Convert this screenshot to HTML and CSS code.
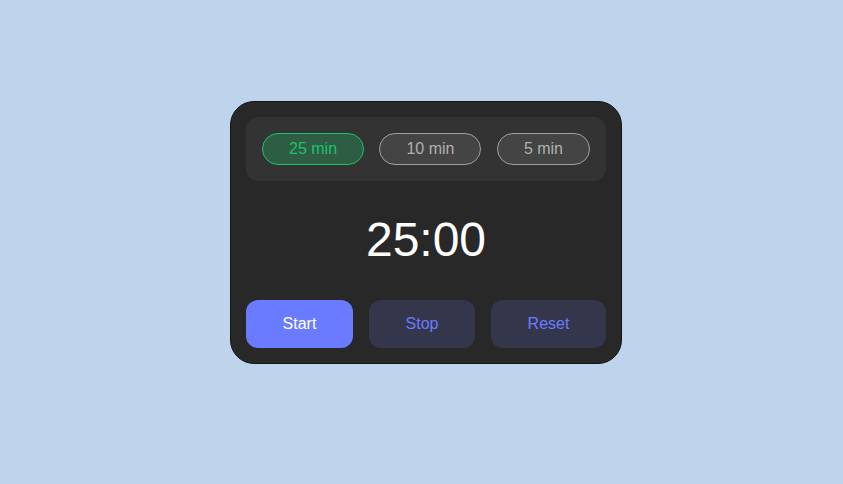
FILE: index.html
```html
<!DOCTYPE html>
<html>
<head>
<meta charset="utf-8">
<link rel="stylesheet" href="styles.css">
</head>
<body>
<div class="card">
  <div class="modes">
    <button class="mode active">25 min</button>
    <button class="mode">10 min</button>
    <button class="mode">5 min</button>
  </div>
  <div class="timer">25:00</div>
  <div class="controls">
    <button class="ctl primary">Start</button>
    <button class="ctl">Stop</button>
    <button class="ctl">Reset</button>
  </div>
</div>
</body>
</html>
```
FILE: styles.css
```css
html, body {
  margin: 0;
  height: 100%;
}
body {
  background: #bed4ed;
  font-family: "Liberation Sans", Arial, sans-serif;
  display: flex;
  justify-content: center;
  align-items: flex-start;
}
.card {
  margin-top: 101px;
  margin-left: 9px;
  width: 360px;
  padding: 15px;
  background: #282828;
  border: 1px solid #151515;
  border-radius: 24px;
}
.modes {
  background: #333333;
  border-radius: 12px;
  padding: 16px;
  display: flex;
  justify-content: space-between;
}
.mode {
  font-family: inherit;
  font-size: 16px;
  height: 32px;
  padding: 0 26px;
  border-radius: 16px;
  background: #444444;
  border: 1px solid #a0a0a0;
  color: #b0b0b0;
}
.mode.active {
  background: #2d5e44;
  border-color: #19c26b;
  color: #1fbf6c;
}
.timer {
  text-align: center;
  color: #ffffff;
  font-size: 48px;
  line-height: 56px;
  margin: 31px 0 32px;
}
.controls {
  display: flex;
  gap: 16px;
}
.ctl {
  flex: 1 1 auto;
  height: 48px;
  border: none;
  border-radius: 12px;
  background: #34364c;
  color: #6b7bff;
  font-family: inherit;
  font-size: 16px;
}
.ctl.primary {
  background: #6b7bff;
  color: #ffffff;
}
```
